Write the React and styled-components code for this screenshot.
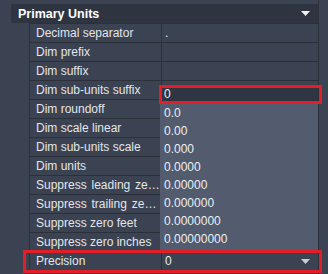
import React from "react";
import styled, { createGlobalStyle } from "styled-components";

const Global = createGlobalStyle`
  html, body { margin: 0; padding: 0; background: #3b4251; }
  body { font-family: "Liberation Sans", Arial, sans-serif; }
`;

const Frame = styled.div`
  position: relative;
  width: 328px;
  height: 274px;
  overflow: hidden;
  display: flex;
  background: #3b4251;
`;

const Main = styled.div`
  width: 319px;
  border-right: 1px solid #2b3039;
  padding-top: 4px;
  box-sizing: border-box;
`;

const Scroll = styled.div`
  flex: 1;
  background: #3c4352;
`;

const Header = styled.div`
  margin-left: 11px;
  height: 19px;
  background: #2e3440;
  display: flex;
  align-items: center;
  justify-content: space-between;
  padding: 0 8px 0 7px;
  color: #ffffff;
  font-weight: bold;
  font-size: 12.5px;
`;

const Caret = styled.svg`
  display: block;
  width: 9px;
  height: 5px;
`;

const Rows = styled.div`
  margin-left: 29px;
  border-left: 1px solid #2b3039;
`;

const Row = styled.div`
  display: grid;
  grid-template-columns: 131px 1fr;
  height: 18px;
  border-top: 1px solid #2b3039;
  font-size: 12px;
  color: #e3e6ea;
`;

const Label = styled.div`
  padding: 0 1px 0 6px;
  line-height: 18px;
  white-space: nowrap;
  overflow: hidden;
  text-overflow: ellipsis;
  word-spacing: ${(p) => (p.$wide ? "1.5px" : "0")};
`;

const Value = styled.div`
  border-left: 1px solid #2b3039;
  padding: 0 8px 0 3px;
  line-height: 18px;
  display: flex;
  align-items: center;
  justify-content: space-between;
  color: #eceef1;
`;

const List = styled.div`
  position: absolute;
  left: 160px;
  top: 85px;
  width: 159px;
  height: 165px;
  background: #525c6e;
  border-right: 1px solid #2a2f38;
  box-sizing: border-box;
  font-size: 12px;
  color: #eceef1;
`;

const Item = styled.div`
  height: ${(p) => (p.$current ? "19px" : "18px")};
  line-height: ${(p) => (p.$current ? "19px" : "18px")};
  padding-left: 4px;
  background: ${(p) => (p.$current ? "#2f3542" : "transparent")};
`;

const Mark = styled.div`
  position: absolute;
  border: 3px solid #e41e26;
  pointer-events: none;
`;

const labels = [
  ["Decimal separator", "."],
  ["Dim prefix", ""],
  ["Dim suffix", ""],
  ["Dim sub-units suffix", ""],
  ["Dim roundoff", ""],
  ["Dim scale linear", ""],
  ["Dim sub-units scale", ""],
  ["Dim units", ""],
  ["Suppress leading zeros", "", true],
  ["Suppress trailing zeros", "", true],
  ["Suppress zero feet", ""],
  ["Suppress zero inches", ""],
];

const options = [
  "0.0",
  "0.00",
  "0.000",
  "0.0000",
  "0.00000",
  "0.000000",
  "0.0000000",
  "0.00000000",
];

const Arrow = ({ color }) => (
  <Caret viewBox="0 0 9 5">
    <path d="M0 0 H9 L4.5 5 Z" fill={color} />
  </Caret>
);

export default function App() {
  return (
    <>
      <Global />
      <Frame>
        <Main>
          <Header>
            <span>Primary Units</span>
            <Arrow color="#f2f2f2" />
          </Header>
          <Rows>
            {labels.map(([l, v, w]) => (
              <Row key={l}>
                <Label $wide={w}>{l}</Label>
                <Value>{v}</Value>
              </Row>
            ))}
            <Row>
              <Label>Precision</Label>
              <Value>
                <span>0</span>
                <Arrow color="#c9ced6" />
              </Value>
            </Row>
          </Rows>
        </Main>
        <Scroll />
        <List>
          <Item $current>0</Item>
          {options.map((o) => (
            <Item key={o}>{o}</Item>
          ))}
        </List>
        <Mark style={{ left: 159, top: 85, width: 157, height: 13 }} />
        <Mark style={{ left: 23, top: 250, width: 293, height: 17 }} />
      </Frame>
    </>
  );
}
